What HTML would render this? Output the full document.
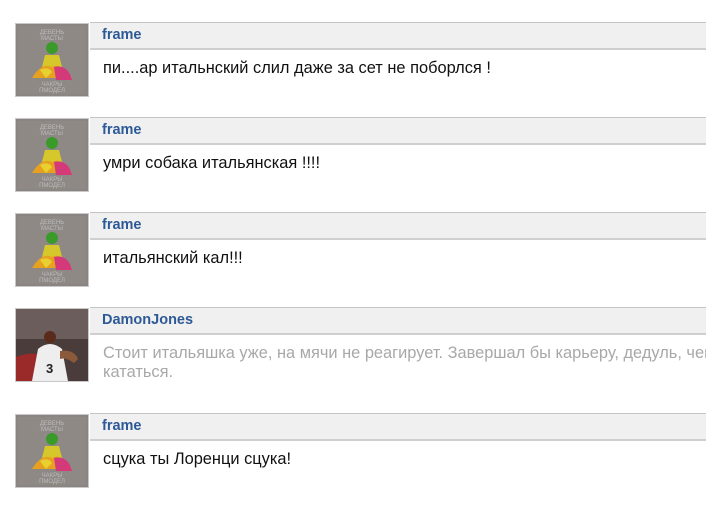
<!DOCTYPE html>
<html><head><meta charset="utf-8"><style>
body{margin:0;width:706px;height:519px;background:#fff;overflow:hidden;font-family:"Liberation Sans",Arial,sans-serif;position:relative}
.av{position:absolute;left:15px;width:72px;height:72px;border:1px solid #c8c8c8;background:#8a8582;overflow:hidden}
.av .in{position:absolute;left:2px;top:2px;width:68px;height:68px;background:#8f8986}
.hd{position:absolute;left:90px;right:0;height:25px;background:#f0f0f0;border-top:1px solid #c4c4c4;border-bottom:2px solid #cfcfcf}
.hd b{position:absolute;left:12px;top:4px;font-size:14.5px;color:#2d5a96}
.tx{position:absolute;left:103px;font-size:16.4px;color:#111;white-space:nowrap;line-height:19px}
.g{color:#a8a8a8}
</style></head><body>
<svg width="0" height="0" style="position:absolute"><defs><g id="fig"><circle cx="34" cy="22" r="6" fill="#3a9a2a"/><path d="M27 29h14l3 12h-20z" fill="#d6c82a"/><path d="M14 52 Q24 36 34 41 Q44 36 54 52z" fill="#e8a020"/><path d="M36 41 Q50 38 54 54 L38 54z" fill="#d43a7a"/><path d="M22 44 Q30 40 34 46 L28 52z" fill="#e8d030"/></g></defs></svg>

<div class="av" style="top:23px"><div class="in"><svg width="68" height="68"><text x="34" y="8" font-size="6" fill="#bbb" text-anchor="middle">ДЕВЕНЬ</text><text x="34" y="14" font-size="6" fill="#bbb" text-anchor="middle">МАСТЫ</text><use href="#fig"/><text x="34" y="60" font-size="6" fill="#bbb" text-anchor="middle">ЧАКРЫ</text><text x="34" y="66" font-size="6" fill="#bbb" text-anchor="middle">ПМОДЕЛ</text></svg></div></div>
<div class="hd" style="top:22px"><b>frame</b></div>
<div class="tx" style="top:59px">пи....ар итальнский слил даже за сет не поборлся !</div>

<div class="av" style="top:118px"><div class="in"><svg width="68" height="68"><text x="34" y="8" font-size="6" fill="#bbb" text-anchor="middle">ДЕВЕНЬ</text><text x="34" y="14" font-size="6" fill="#bbb" text-anchor="middle">МАСТЫ</text><use href="#fig"/><text x="34" y="60" font-size="6" fill="#bbb" text-anchor="middle">ЧАКРЫ</text><text x="34" y="66" font-size="6" fill="#bbb" text-anchor="middle">ПМОДЕЛ</text></svg></div></div>
<div class="hd" style="top:117px"><b>frame</b></div>
<div class="tx" style="top:154px">умри собака итальянская !!!!</div>

<div class="av" style="top:213px"><div class="in"><svg width="68" height="68"><text x="34" y="8" font-size="6" fill="#bbb" text-anchor="middle">ДЕВЕНЬ</text><text x="34" y="14" font-size="6" fill="#bbb" text-anchor="middle">МАСТЫ</text><use href="#fig"/><text x="34" y="60" font-size="6" fill="#bbb" text-anchor="middle">ЧАКРЫ</text><text x="34" y="66" font-size="6" fill="#bbb" text-anchor="middle">ПМОДЕЛ</text></svg></div></div>
<div class="hd" style="top:212px"><b>frame</b></div>
<div class="tx" style="top:249px">итальянский кал!!!</div>

<div class="av" style="top:308px;background:#4a3a38"><svg width="72" height="72"><rect width="72" height="72" fill="#4a3c3a"/><rect y="0" width="72" height="30" fill="#6b5d5c"/><path d="M0 48 Q20 40 30 50 L20 72 H0z" fill="#9a2a2a"/><path d="M16 72 L22 40 Q34 30 46 40 L52 72z" fill="#eee"/><path d="M44 42 Q58 40 62 50 L58 54 Q50 48 44 50z" fill="#8a5a3a"/><circle cx="34" cy="28" r="6" fill="#5a2a1a"/><text x="30" y="64" font-size="13" fill="#222" font-weight="bold">3</text></svg></div>
<div class="hd" style="top:307px"><b>DamonJones</b></div>
<div class="tx g" style="top:344px">Стоит итальяшка уже, на мячи не реагирует. Завершал бы карьеру, дедуль, чем<br>кататься.</div>

<div class="av" style="top:414px"><div class="in"><svg width="68" height="68"><text x="34" y="8" font-size="6" fill="#bbb" text-anchor="middle">ДЕВЕНЬ</text><text x="34" y="14" font-size="6" fill="#bbb" text-anchor="middle">МАСТЫ</text><use href="#fig"/><text x="34" y="60" font-size="6" fill="#bbb" text-anchor="middle">ЧАКРЫ</text><text x="34" y="66" font-size="6" fill="#bbb" text-anchor="middle">ПМОДЕЛ</text></svg></div></div>
<div class="hd" style="top:413px"><b>frame</b></div>
<div class="tx" style="top:450px">сцука ты Лоренци сцука!</div>

</body></html>
